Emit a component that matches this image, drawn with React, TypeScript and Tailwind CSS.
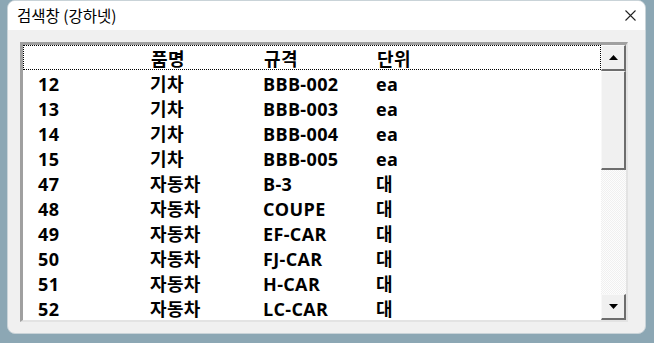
const rows = [
  { no: "12", name: "기차", spec: "BBB-002", unit: "ea" },
  { no: "13", name: "기차", spec: "BBB-003", unit: "ea" },
  { no: "14", name: "기차", spec: "BBB-004", unit: "ea" },
  { no: "15", name: "기차", spec: "BBB-005", unit: "ea" },
  { no: "47", name: "자동차", spec: "B-3", unit: "대" },
  { no: "48", name: "자동차", spec: "COUPE", unit: "대" },
  { no: "49", name: "자동차", spec: "EF-CAR", unit: "대" },
  { no: "50", name: "자동차", spec: "FJ-CAR", unit: "대" },
  { no: "51", name: "자동차", spec: "H-CAR", unit: "대" },
  { no: "52", name: "자동차", spec: "LC-CAR", unit: "대" },
]

const cols = "grid h-[25px] grid-cols-[112px_113px_113px_1fr] items-center pt-[2px] pl-[15px]"

function ScrollButton({ up }: { up?: boolean }) {
  return (
    <div className="flex h-[26px] w-[25px] items-center justify-center border-t border-l border-r-2 border-b-2 border-t-[#f8f8f8] border-l-[#f8f8f8] border-r-[#6d6d6d] border-b-[#6d6d6d] bg-[#f0f0f0]">
      <svg width="9" height="5" viewBox="0 0 9 5">
        {up ? (
          <polygon points="4.5,0 9,5 0,5" fill="#000" />
        ) : (
          <polygon points="0,0 9,0 4.5,5" fill="#000" />
        )}
      </svg>
    </div>
  )
}

export default function App() {
  return (
    <div className="h-[343px] w-[654px] bg-[#8ca7b4] pr-[8px] pb-[9px] pl-[7px]">
      <div className="flex h-full flex-col overflow-hidden rounded-[8px] border border-[#c9d3d8] bg-[#f0f0f0] font-['Noto_Sans_CJK_KR',sans-serif]">
        <div className="flex h-[29px] items-center justify-between bg-white pr-[9px] pl-[9px]">
          <span className="text-[15.5px] leading-none text-black">
            검색창 (강하넷)
          </span>
          <svg width="11" height="11" viewBox="0 0 11 11">
            <path d="M0.5 0.5 L10.5 10.5 M10.5 0.5 L0.5 10.5" stroke="#222" strokeWidth="1.1" />
          </svg>
        </div>

        <div className="pt-[12px] pl-[12px]">
          <div className="flex h-[280px] w-[608px] border-t-[3px] border-l-[3px] border-r-2 border-b-2 border-t-[#a0a0a0] border-l-[#a0a0a0] border-r-[#e3e3e3] border-b-[#e3e3e3] bg-white">
            <div className="flex-1 font-['Open_Sans','Noto_Sans_CJK_KR',sans-serif] text-[18px] font-bold leading-none tracking-[0.02em] text-black">
              <div className={`${cols} border border-dotted border-black`}>
                <span />
                <span>품명</span>
                <span>규격</span>
                <span>단위</span>
              </div>
              {rows.map((r) => (
                <div key={r.no} className={cols}>
                  <span>{r.no}</span>
                  <span>{r.name}</span>
                  <span>{r.spec}</span>
                  <span>{r.unit}</span>
                </div>
              ))}
            </div>

            <div className="flex w-[25px] flex-col">
              <ScrollButton up />
              <div className="h-[99px] border-t border-l border-r-2 border-b-2 border-t-[#f8f8f8] border-l-[#f8f8f8] border-r-[#6d6d6d] border-b-[#6d6d6d] bg-[#f0f0f0]" />
              <div className="flex-1 bg-[repeating-conic-gradient(#f0f0f0_0_25%,#fdfdfd_0_50%)] bg-[length:2px_2px]" />
              <ScrollButton />
            </div>
          </div>
        </div>
      </div>
    </div>
  )
}
